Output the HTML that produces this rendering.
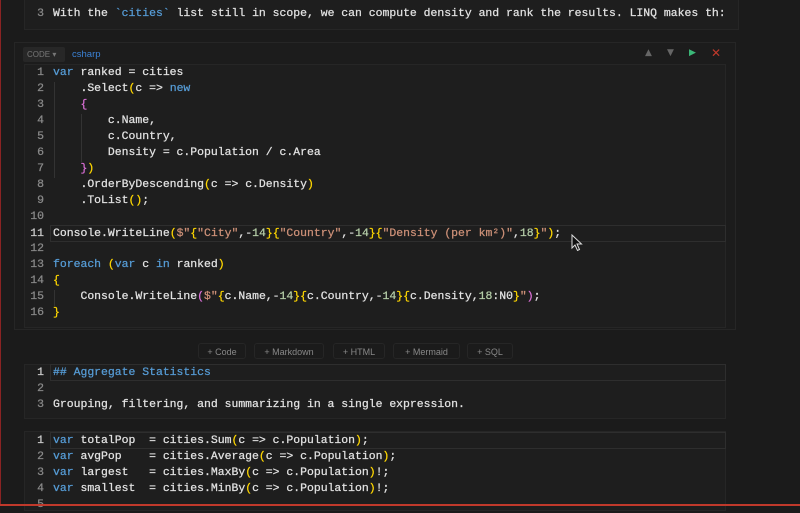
<!DOCTYPE html>
<html><head><meta charset="utf-8"><style>
*{margin:0;padding:0;box-sizing:border-box}
body{width:800px;height:506px;background:#1b1b1b;overflow:hidden;position:relative;font-family:"Liberation Mono","DejaVu Sans Mono",monospace;font-size:11.45px;color:#e2e2e2}
.edge{position:absolute;left:0;top:0;width:1px;height:506px;background:#8a2323}
.bot{position:absolute;left:0;bottom:0;width:800px;height:2px;background:#c0392b}
.cell{position:absolute;background:#1e1e1e;border:1px solid #262626}
.ln{position:absolute;height:16px;line-height:16px;white-space:pre;-webkit-text-stroke:0.25px currentColor}
.n{position:absolute;width:22px;text-align:right;color:#8a8a8a;left:22px}
.c{left:53px}
.k{color:#569cd6}.s{color:#ce9178}.y{color:#ffd700}.p{color:#da70d6}.g{color:#b5cea8}
.hl{position:absolute;border:1px solid #2e2e2e}
.btn{position:absolute;top:343px;height:16px;line-height:16px;font-family:"Liberation Sans",sans-serif;font-size:9px;color:#888;border:1px solid #262626;border-radius:3px;text-align:center}
.guide{position:absolute;width:1px;background:#333}
</style></head><body>
<div class="edge"></div>
<div class="cell" style="left:24px;top:-2px;width:715px;height:32px"></div>
<div class="ln n" style="top:6px">3</div>
<div class="ln c" style="top:6px">With the <span class="k">`cities`</span> list still in scope, we can compute density and rank the results. LINQ makes th:</div>

<div class="cell" style="left:14px;top:42px;width:722px;height:288px;background:#1c1c1c"></div>
<div style="position:absolute;left:23px;top:47px;width:42px;height:15px;background:#272727;border-radius:2px;font-family:'Liberation Sans',sans-serif;font-size:8px;color:#777;line-height:15px;padding-left:4px">CODE ▾</div>
<div style="position:absolute;left:72px;top:47px;font-family:'Liberation Sans',sans-serif;font-size:9.5px;color:#3b82d6;line-height:15px">csharp</div>
<div style="position:absolute;left:645px;top:48px;font-size:9px;color:#666;font-family:'DejaVu Sans',sans-serif">▲</div>
<div style="position:absolute;left:667px;top:48px;font-size:9px;color:#666;font-family:'DejaVu Sans',sans-serif">▼</div>
<div style="position:absolute;left:689px;top:48px;font-size:9px;color:#3bb878;font-family:'DejaVu Sans',sans-serif">▶</div>
<div style="position:absolute;left:711px;top:46px;font-size:12px;color:#c0392b;font-family:'DejaVu Sans',sans-serif">✕</div>
<div class="cell" style="left:24px;top:64px;width:702px;height:264px;background:#1e1e1e"></div>
<div class="hl" style="left:50px;top:225px;width:676px;height:17px"></div>
<div class="guide" style="left:54px;top:82px;height:96px"></div>
<div class="guide" style="left:81px;top:114px;height:48px"></div>
<div class="guide" style="left:54px;top:290px;height:16px"></div>
<div class="ln n" style="top:65px">1</div><div class="ln c" style="top:65px"><span class="k">var</span> ranked = cities</div>
<div class="ln n" style="top:81px">2</div><div class="ln c" style="top:81px">    .Select<span class="y">(</span>c =&gt; <span class="k">new</span></div>
<div class="ln n" style="top:97px">3</div><div class="ln c" style="top:97px">    <span class="p">{</span></div>
<div class="ln n" style="top:113px">4</div><div class="ln c" style="top:113px">        c.Name,</div>
<div class="ln n" style="top:129px">5</div><div class="ln c" style="top:129px">        c.Country,</div>
<div class="ln n" style="top:145px">6</div><div class="ln c" style="top:145px">        Density = c.Population / c.Area</div>
<div class="ln n" style="top:161px">7</div><div class="ln c" style="top:161px">    <span class="p">}</span><span class="y">)</span></div>
<div class="ln n" style="top:177px">8</div><div class="ln c" style="top:177px">    .OrderByDescending<span class="y">(</span>c =&gt; c.Density<span class="y">)</span></div>
<div class="ln n" style="top:193px">9</div><div class="ln c" style="top:193px">    .ToList<span class="y">()</span>;</div>
<div class="ln n" style="top:209px">10</div>
<div class="ln n" style="top:226px;color:#ccc">11</div><div class="ln c" style="top:226px">Console.WriteLine<span class="y">(</span><span class="s">$"</span><span class="y">{</span><span class="s">"City"</span>,-<span class="g">14</span><span class="y">}{</span><span class="s">"Country"</span>,-<span class="g">14</span><span class="y">}{</span><span class="s">"Density (per km²)"</span>,<span class="g">18</span><span class="y">}</span><span class="s">"</span><span class="y">)</span>;</div>
<div class="ln n" style="top:241px">12</div>
<div class="ln n" style="top:257px">13</div><div class="ln c" style="top:257px"><span class="k">foreach</span> <span class="y">(</span><span class="k">var</span> c <span class="k">in</span> ranked<span class="y">)</span></div>
<div class="ln n" style="top:273px">14</div><div class="ln c" style="top:273px"><span class="y">{</span></div>
<div class="ln n" style="top:289px">15</div><div class="ln c" style="top:289px">    Console.WriteLine<span class="p">(</span><span class="s">$"</span><span class="y">{</span>c.Name,-<span class="g">14</span><span class="y">}{</span>c.Country,-<span class="g">14</span><span class="y">}{</span>c.Density,<span class="g">18</span>:N0<span class="y">}</span><span class="s">"</span><span class="p">)</span>;</div>
<div class="ln n" style="top:305px">16</div><div class="ln c" style="top:305px"><span class="y">}</span></div>
<svg style="position:absolute;left:571px;top:234px" width="12" height="18" viewBox="0 0 12 18"><path d="M1 1 L1 14 L4 11 L6.5 16.5 L8.5 15.5 L6 10 L10.5 10 Z" fill="#111" stroke="#ddd" stroke-width="1"/></svg>

<div class="btn" style="left:198px;width:48px">+ Code</div>
<div class="btn" style="left:254px;width:70px">+ Markdown</div>
<div class="btn" style="left:333px;width:52px">+ HTML</div>
<div class="btn" style="left:393px;width:67px">+ Mermaid</div>
<div class="btn" style="left:467px;width:46px">+ SQL</div>

<div class="cell" style="left:24px;top:364px;width:702px;height:55px"></div>
<div class="hl" style="left:50px;top:364px;width:676px;height:17px"></div>
<div class="ln n" style="top:365px;color:#ccc">1</div><div class="ln c k" style="top:365px">## Aggregate Statistics</div>
<div class="ln n" style="top:381px">2</div>
<div class="ln n" style="top:397px">3</div><div class="ln c" style="top:397px">Grouping, filtering, and summarizing in a single expression.</div>

<div class="cell" style="left:24px;top:431px;width:702px;height:80px"></div>
<div class="hl" style="left:50px;top:432px;width:676px;height:17px"></div>
<div class="ln n" style="top:433px;color:#ccc">1</div><div class="ln c" style="top:433px"><span class="k">var</span> totalPop  = cities.Sum<span class="y">(</span>c =&gt; c.Population<span class="y">)</span>;</div>
<div class="ln n" style="top:449px">2</div><div class="ln c" style="top:449px"><span class="k">var</span> avgPop    = cities.Average<span class="y">(</span>c =&gt; c.Population<span class="y">)</span>;</div>
<div class="ln n" style="top:465px">3</div><div class="ln c" style="top:465px"><span class="k">var</span> largest   = cities.MaxBy<span class="y">(</span>c =&gt; c.Population<span class="y">)</span>!;</div>
<div class="ln n" style="top:481px">4</div><div class="ln c" style="top:481px"><span class="k">var</span> smallest  = cities.MinBy<span class="y">(</span>c =&gt; c.Population<span class="y">)</span>!;</div>
<div class="ln n" style="top:497px">5</div>
<div class="bot"></div>
</body></html>
